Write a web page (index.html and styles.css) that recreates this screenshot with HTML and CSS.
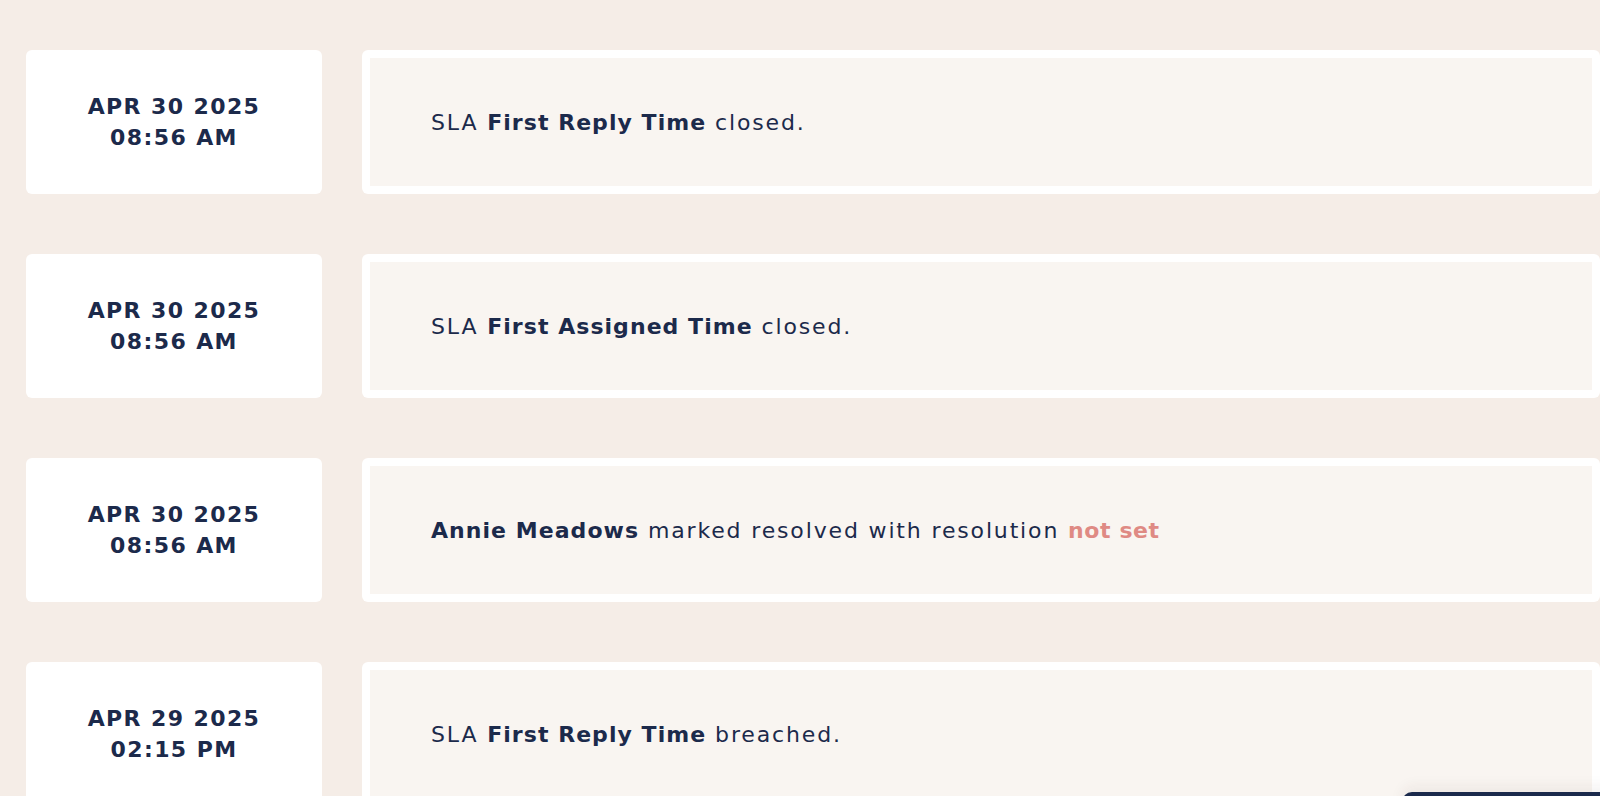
FILE: index.html
```html
<!DOCTYPE html>
<html lang="en">
<head>
<meta charset="utf-8">
<title>Timeline</title>
<link rel="stylesheet" href="styles.css">
</head>
<body>
<main class="timeline">
  <div class="row">
    <div class="date-card"><span>APR 30 2025</span><span>08:56 AM</span></div>
    <div class="event-card"><div class="event-inner"><p>SLA <b>First Reply Time</b> closed.</p></div></div>
  </div>
  <div class="row">
    <div class="date-card"><span>APR 30 2025</span><span>08:56 AM</span></div>
    <div class="event-card"><div class="event-inner"><p>SLA <b>First Assigned Time</b> closed.</p></div></div>
  </div>
  <div class="row">
    <div class="date-card"><span>APR 30 2025</span><span>08:56 AM</span></div>
    <div class="event-card"><div class="event-inner"><p><b>Annie Meadows</b> marked resolved with resolution <b class="warn">not set</b></p></div></div>
  </div>
  <div class="row">
    <div class="date-card"><span>APR 29 2025</span><span>02:15 PM</span></div>
    <div class="event-card"><div class="event-inner"><p>SLA <b>First Reply Time</b> breached.</p></div></div>
  </div>
</main>
<div class="floating-bar"></div>
</body>
</html>
```
FILE: styles.css
```css
html, body {
  margin: 0;
  padding: 0;
}
body {
  background: #f5ede7;
  font-family: "DejaVu Sans", "Open Sans", sans-serif;
  color: #1c2a4b;
  height: 796px;
  overflow: hidden;
}
.timeline {
  display: flex;
  flex-direction: column;
  gap: 60px;
  padding: 50px 0 0 26px;
}
.row {
  display: flex;
  gap: 40px;
  height: 144px;
}
.date-card {
  width: 296px;
  flex: none;
  background: #ffffff;
  border-radius: 6px;
  display: flex;
  flex-direction: column;
  align-items: center;
  justify-content: center;
  font-weight: 700;
  font-size: 22px;
  letter-spacing: 1.4px;
  line-height: 31px;
}
.event-card {
  flex: 1;
  background: #ffffff;
  border-radius: 6px;
  padding: 8px;
  display: flex;
}
.event-inner {
  flex: 1;
  background: #f9f5f1;
  display: flex;
  align-items: center;
  padding-left: 61px;
}
.event-inner p {
  margin: 0;
  font-size: 22px;
  letter-spacing: 1.85px;
}
.event-inner b {
  font-weight: 700;
  letter-spacing: 1.05px;
}
.event-inner .warn {
  color: #df8a84;
  letter-spacing: 0.6px;
}
.floating-bar {
  position: absolute;
  left: 1402px;
  top: 792px;
  width: 260px;
  height: 60px;
  background: #1b2a4c;
  border-radius: 10px;
  box-shadow: 0 -6px 14px rgba(60, 40, 30, 0.06);
}
```
